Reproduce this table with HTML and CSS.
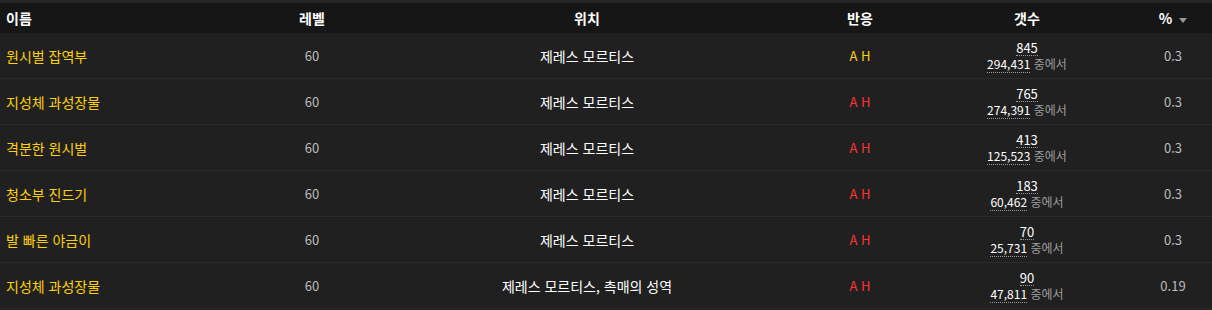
FILE: index.html
```html
<!DOCTYPE html>
<html lang="ko">
<head>
<meta charset="utf-8">
<link rel="stylesheet" href="styles.css">
</head>
<body>
<div class="table">
  <div class="row head">
    <div class="c name">이름</div>
    <div class="c lvl">레벨</div>
    <div class="c loc">위치</div>
    <div class="c react">반응</div>
    <div class="c count">갯수</div>
    <div class="c pct">% <span class="arrow"></span></div>
  </div>
  <div class="row">
    <div class="c name">원시벌 잡역부</div>
    <div class="c lvl">60</div>
    <div class="c loc">제레스 모르티스</div>
    <div class="c react"><span class="y">A</span> <span class="y">H</span></div>
    <div class="c count"><span class="n">845</span><span class="of"><span class="t">294,431</span> 중에서</span></div>
    <div class="c pct">0.3</div>
  </div>
  <div class="row">
    <div class="c name">지성체 과성장물</div>
    <div class="c lvl">60</div>
    <div class="c loc">제레스 모르티스</div>
    <div class="c react"><span class="r">A</span> <span class="r">H</span></div>
    <div class="c count"><span class="n">765</span><span class="of"><span class="t">274,391</span> 중에서</span></div>
    <div class="c pct">0.3</div>
  </div>
  <div class="row">
    <div class="c name">격분한 원시벌</div>
    <div class="c lvl">60</div>
    <div class="c loc">제레스 모르티스</div>
    <div class="c react"><span class="r">A</span> <span class="r">H</span></div>
    <div class="c count"><span class="n">413</span><span class="of"><span class="t">125,523</span> 중에서</span></div>
    <div class="c pct">0.3</div>
  </div>
  <div class="row">
    <div class="c name">청소부 진드기</div>
    <div class="c lvl">60</div>
    <div class="c loc">제레스 모르티스</div>
    <div class="c react"><span class="r">A</span> <span class="r">H</span></div>
    <div class="c count"><span class="n">183</span><span class="of"><span class="t">60,462</span> 중에서</span></div>
    <div class="c pct">0.3</div>
  </div>
  <div class="row">
    <div class="c name">발 빠른 야금이</div>
    <div class="c lvl">60</div>
    <div class="c loc">제레스 모르티스</div>
    <div class="c react"><span class="r">A</span> <span class="r">H</span></div>
    <div class="c count"><span class="n">70</span><span class="of"><span class="t">25,731</span> 중에서</span></div>
    <div class="c pct">0.3</div>
  </div>
  <div class="row">
    <div class="c name">지성체 과성장물</div>
    <div class="c lvl">60</div>
    <div class="c loc">제레스 모르티스, 촉매의 성역</div>
    <div class="c react"><span class="r">A</span> <span class="r">H</span></div>
    <div class="c count"><span class="n">90</span><span class="of"><span class="t">47,811</span> 중에서</span></div>
    <div class="c pct">0.19</div>
  </div>
</div>
</body>
</html>
```

FILE: styles.css
```css
html, body {
  margin: 0;
  padding: 0;
  background: #1c1c1c;
}
body {
  font-family: "Noto Sans CJK KR", "Noto Sans", sans-serif;
  font-size: 13px;
  color: #fff;
}
.table {
  width: 1212px;
  padding-top: 3px;
  background: #262626;
}
.row {
  display: grid;
  grid-template-columns: 250px 124px 426px 120px 214px 78px;
  height: 45px;
  border-bottom: 1px solid #2b2b2b;
  background: #202020;
  align-items: center;
}
.row.head {
  height: 30px;
  background: #161616;
  border-bottom: none;
  font-weight: bold;
  font-size: 14px;
  color: #fff;
}
.c {
  text-align: center;
  line-height: 16px;
}
.c.name {
  text-align: left;
  padding-left: 6px;
}
.row:not(.head) .name { color: #ffd100; font-size: 14px; }
.row:not(.head) .lvl { color: #bdbdbd; }
.row:not(.head) .loc { color: #fff; font-size: 14px; }
.row:not(.head) .pct { color: #bdbdbd; }
.y { color: #ffd100; }
.r { color: #ff3333; }
.count {
  display: flex;
  flex-direction: column;
  align-items: center;
}
.n {
  line-height: 15px;
  border-bottom: 1px dotted #999;
}
.of {
  font-size: 12px;
  line-height: 15px;
  color: #9d9d9d;
}
.t {
  color: #fff;
  border-bottom: 1px dotted #999;
}
.pct .arrow {
  display: inline-block;
  width: 0;
  height: 0;
  border-left: 4px solid transparent;
  border-right: 4px solid transparent;
  border-top: 5px solid #999;
  vertical-align: middle;
  margin-left: 3px;
}
```
